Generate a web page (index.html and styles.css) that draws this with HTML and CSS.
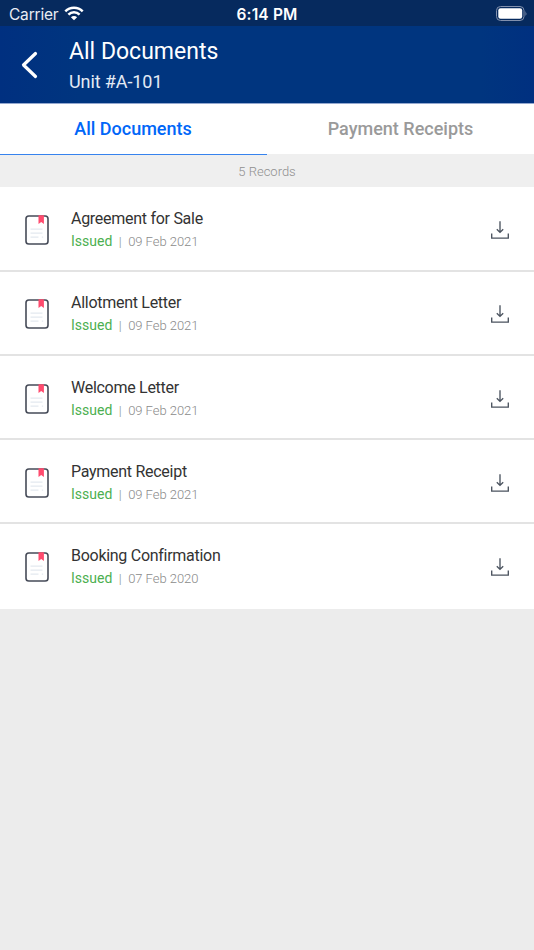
FILE: index.html
```html
<!DOCTYPE html>
<html lang="en">
<head>
<meta charset="utf-8">
<title>All Documents</title>
<link rel="stylesheet" href="styles.css">
</head>
<body>
<svg class="defs" aria-hidden="true">
  <symbol id="doc" viewBox="0 0 24 30">
    <rect x="1" y="1" width="22" height="28" rx="2.8" fill="#fff" stroke="#464b58" stroke-width="1.6"/>
    <path d="M5.5 14.2h12M5.5 18.2h12M5.5 22.2h8M16.8 22.2h1.4" stroke="#e4e9f0" stroke-width="1.3" fill="none"/>
    <path d="M13.5 .3h5.4v8.7l-2.7-2.1-2.7 2.1z" fill="#ff4b6e"/>
  </symbol>
  <symbol id="download" viewBox="0 0 20 20">
    <path d="M10 1.3v11M6.8 9.2l3.2 3.2 3.2-3.2M1.7 13.4v4.7h16.6v-4.7" fill="none" stroke="#4b535f" stroke-width="1.35"/>
  </symbol>
</svg>
<div class="status">
  <div class="carrier"><span>Carrier</span>
    <svg class="wifi" viewBox="0 0 20 15"><path d="M1.3 5.4a12.3 12.3 0 0 1 17.4 0M4.4 8.6a7.9 7.9 0 0 1 11.2 0" fill="none" stroke="#fff" stroke-width="2.5"/><path d="M10 14.3 6.9 11.2a4.4 4.4 0 0 1 6.2 0z" fill="#fff"/></svg>
  </div>
  <div class="time">6:14 PM</div>
  <svg class="battery" viewBox="0 0 32 15"><rect x=".5" y=".5" width="27.5" height="14" rx="4" fill="none" stroke="#8190ad"/><rect x="2.3" y="2.3" width="23.9" height="10.4" rx="2.2" fill="#fff"/><path d="M29.5 5q1.8 2.5 0 5z" fill="#8190ad"/></svg>
</div>
<header class="header">
  <svg class="back" viewBox="0 0 18 28"><path d="M15.5 2.5 3.5 14l12 11.5" fill="none" stroke="#fff" stroke-width="3.2" stroke-linecap="round" stroke-linejoin="round"/></svg>
  <div class="heading">
    <h1>All Documents</h1>
    <p>Unit #A-101</p>
  </div>
</header>
<nav class="tabs">
  <div class="tab active"><span>All Documents</span></div>
  <div class="tab"><span>Payment Receipts</span></div>
</nav>
<div class="records">5 Records</div>
<main class="list">
  <div class="row"><svg class="doc"><use href="#doc"/></svg><div class="info"><div class="name">Agreement for Sale</div><div class="meta"><span class="state">Issued</span><span class="bar">|</span><span>09 Feb 2021</span></div></div><svg class="download"><use href="#download"/></svg></div>
  <div class="row"><svg class="doc"><use href="#doc"/></svg><div class="info"><div class="name">Allotment Letter</div><div class="meta"><span class="state">Issued</span><span class="bar">|</span><span>09 Feb 2021</span></div></div><svg class="download"><use href="#download"/></svg></div>
  <div class="row"><svg class="doc"><use href="#doc"/></svg><div class="info"><div class="name">Welcome Letter</div><div class="meta"><span class="state">Issued</span><span class="bar">|</span><span>09 Feb 2021</span></div></div><svg class="download"><use href="#download"/></svg></div>
  <div class="row"><svg class="doc"><use href="#doc"/></svg><div class="info"><div class="name">Payment Receipt</div><div class="meta"><span class="state">Issued</span><span class="bar">|</span><span>09 Feb 2021</span></div></div><svg class="download"><use href="#download"/></svg></div>
  <div class="row"><svg class="doc"><use href="#doc"/></svg><div class="info"><div class="name">Booking Confirmation</div><div class="meta"><span class="state">Issued</span><span class="bar">|</span><span>07 Feb 2020</span></div></div><svg class="download"><use href="#download"/></svg></div>
</main>
</body>
</html>
```
FILE: styles.css
```css
* { box-sizing: border-box; margin: 0; }
body { background: #ececec; font-family: Roboto, sans-serif; min-height: 950px; }
svg { display: block; flex: none; }
.defs { display: none; }
.status { height: 26px; background: #062a5e; color: #fff; display: grid; grid-template-columns: 1fr auto 1fr; align-items: center; padding: 1px 7px 0 9px; font-family: Inter, sans-serif; font-size: 15.5px; }
.carrier span, .time { padding-top: 1px; }
.carrier { display: flex; align-items: center; gap: 6px; color: #e9edf4; letter-spacing: -.2px; }
.wifi { width: 20px; height: 15px; }
.time { font-weight: 600; letter-spacing: .15px; margin-right: 2px; }
.battery { width: 32px; height: 15px; justify-self: end; margin-right: -1px; }
.header { height: 77px; background: linear-gradient(90deg, #003080, #00357f 15%, #00357f 90%, #003080); color: #fff; display: flex; padding-left: 20px; }
.back { width: 18px; height: 28px; margin-top: 25px; }
.heading { padding-left: 31px; }
h1 { font-size: 23px; line-height: 28px; font-weight: 400; margin-top: 12px; }
.heading p { font-size: 18px; line-height: 22px; margin-top: 5px; color: #e4ebf5; letter-spacing: -.1px; }
.tabs { height: 51px; background: #fff; border-top: 1px solid #94a8cf; display: flex; }
.tab { flex: 1 1 0; width: 50%; display: flex; justify-content: center; padding-top: 14px; font-size: 18px; line-height: 21px; font-weight: 500; color: #9a9a9a; }
.tab.active { color: #0066f8; border-bottom: 1px solid #3683ee; margin-bottom: -1px; position: relative; }
.active span { margin-right: 1px; }
.records { height: 33.3px; background: #efefef; color: #8f8f8f; text-align: center; font-size: 13px; font-weight: 300; line-height: 35px; }
.row { height: 84.3px; background: #fff; border-bottom: 2px solid #e3e3e3; display: flex; align-items: center; padding: 3px 24px 0 25px; }
.row:last-child { border-bottom-color: transparent; }
.doc { width: 24px; height: 30px; }
.info { flex: 1; padding-left: 22px; }
.name { font-size: 16px; line-height: 20px; color: #333; letter-spacing: -.28px; }
.meta { display: flex; font-size: 13px; line-height: 18px; margin-top: 4px; color: #8a8a8a; font-weight: 300; letter-spacing: -.04px; }
.state { color: #4caf50; font-size: 14px; font-weight: 400; line-height: 17px; letter-spacing: 0; }
.bar { margin: 0 6.5px; }
.download { width: 20px; height: 20px; }
```
